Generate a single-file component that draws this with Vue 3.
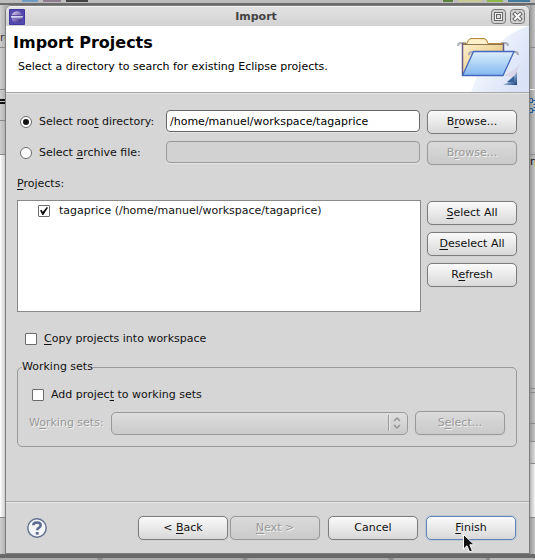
<script setup>
import { ref } from 'vue'

const source = ref('directory')
const rootPath = ref('/home/manuel/workspace/tagaprice')
const archivePath = ref('')
const projects = ref([
  { id: 'tagaprice', label: 'tagaprice (/home/manuel/workspace/tagaprice)', selected: true },
])
const copyProjects = ref(false)
const addToSets = ref(false)

function selectAll(value) {
  projects.value.forEach((p) => { p.selected = value })
}
</script>

<template>
  <div class="desktop">
    <div class="behind-top" aria-hidden="true"><i class="blue"></i><i class="violet"></i><i class="dark"></i><i class="space"></i><i class="green"></i><i class="olive"></i><i class="lime"></i><i class="sky"></i></div>

    <div class="behind left" aria-hidden="true">
      <div class="strip l-tab"><span>re</span></div>
      <div class="strip l-bar"></div>
      <div class="strip l-rule"></div>
      <div class="strip l-tools"></div>
      <div class="strip l-head"></div>
      <div class="strip page"></div>
      <div class="strip status"></div>
    </div>

    <main class="dialog">
      <div class="titlebar">
        <svg class="app-icon" viewBox="0 0 16 16" width="16" height="16" aria-hidden="true">
          <defs>
            <linearGradient id="ball" x1="0" y1="0" x2="1" y2="1">
              <stop offset="0" stop-color="#e9dff4" />
              <stop offset="0.45" stop-color="#8f7fc4" />
              <stop offset="1" stop-color="#251a72" />
            </linearGradient>
          </defs>
          <rect width="16" height="16" rx="1" fill="#5248b0" />
          <rect x="0.5" y="0.5" width="15" height="15" rx="1" fill="none" stroke="#4338a0" />
          <circle cx="8" cy="8" r="5.7" fill="url(#ball)" />
          <path d="M2 6.5h12M2 9.5h12" stroke="#37298a" stroke-width="0.8" />
          <path d="M2 7.4h12M2.500 8.900h11" stroke="#e4e6fb" stroke-width="0.9" />
        </svg>
        <span class="caption">Import</span>
        <button class="win" type="button" aria-label="Maximize">
          <svg viewBox="0 0 15 15" width="15" height="15">
            <rect x="0.5" y="0.5" width="14" height="14" rx="3" fill="#d2d2d2" stroke="#777" />
            <rect x="3.5" y="3.5" width="8" height="8" fill="#f4f4f4" stroke="#666" />
            <rect x="5.5" y="5.5" width="4" height="4" fill="#ddd" stroke="#666" />
          </svg>
        </button>
        <button class="win" type="button" aria-label="Close">
          <svg viewBox="0 0 15 15" width="15" height="15">
            <rect x="0.5" y="0.5" width="14" height="14" rx="3" fill="#d2d2d2" stroke="#777" />
            <path d="M5 5l5 5M10 5l-5 5" stroke="#666" stroke-width="4" stroke-linecap="square" />
            <path d="M5 5l5 5M10 5l-5 5" stroke="#fafafa" stroke-width="2" stroke-linecap="square" />
          </svg>
        </button>
      </div>

      <header class="banner">
        <div class="banner-text">
          <h1>Import Projects</h1>
          <p>Select a directory to search for existing Eclipse projects.</p>
        </div>
        <svg class="banner-art" viewBox="1 0 75 66" width="75" height="66" aria-hidden="true">
          <defs>
            <linearGradient id="wash" x1="0" y1="0" x2="1" y2="0.6">
              <stop offset="0" stop-color="#fff" />
              <stop offset="1" stop-color="#d9e2f7" />
            </linearGradient>
            <linearGradient id="manila" x1="0" y1="0" x2="1" y2="1">
              <stop offset="0" stop-color="#fff5d6" />
              <stop offset="1" stop-color="#e0b765" />
            </linearGradient>
            <linearGradient id="front" x1="0" y1="0" x2="0" y2="1">
              <stop offset="0" stop-color="#deeffd" />
              <stop offset="1" stop-color="#83b7f0" />
            </linearGradient>
            <linearGradient id="corner" x1="0" y1="0" x2="1" y2="1">
              <stop offset="0.4" stop-color="#b5d0ee" />
              <stop offset="1" stop-color="#123c78" />
            </linearGradient>
          </defs>
          <path d="M76 0C58 5 34 20 18 66H76Z" fill="url(#wash)" />
          <path d="M50 49q9-2 17-11l-6 14z" fill="#d9cfe0" opacity="0.7" />
          <path d="M5 20q0-3 3-3h5M48 17h4q3 0 3 3" fill="none" stroke="#aeb2b8" stroke-width="2" />
          <path d="M9.500 49V17.500H14Q15 12.500 18 12.500H31Q34 12.500 35 17.500H50.500V49Z" fill="url(#manila)" stroke="#b5893b" />
          <path d="M9.500 49V17M50.500 17V26" stroke="#625a83" stroke-width="1.500" />
          <path d="M10 18.500H50" stroke="#8c7753" />
          <path d="M15 18q1-4 4-4h11q3 0 4 4z" fill="#fff2cb" />
          <path d="M16 29q0-3 3-3h4M59 26h3q3 0 3 3" fill="none" stroke="#a7acb8" stroke-width="2" />
          <path d="M20.500 25.500H61L50 49.500H9.500Z" fill="url(#front)" stroke="#4468be" stroke-width="1.300" />
          <path d="M64 45V59H50Q60 55 64 45Z" fill="url(#corner)" />
          <path d="M61 50v6h-7z" fill="#356399" />
        </svg>
      </header>

      <form class="body" @submit.prevent>
        <div class="sources">
          <label class="choice"><input v-model="source" type="radio" name="source" value="directory"><span>Select roo<u>t</u> directory:</span></label>
          <input v-model="rootPath" class="field" type="text" aria-label="Root directory">
          <button class="btn" type="button"><span>B<u>r</u>owse...</span></button>

          <label class="choice"><input v-model="source" type="radio" name="source" value="archive"><span>Select <u>a</u>rchive file:</span></label>
          <input v-model="archivePath" class="field" type="text" aria-label="Archive file" disabled>
          <button class="btn" type="button" disabled><span>B<u>r</u>owse...</span></button>
        </div>

        <h2 id="projects-title"><u>P</u>rojects:</h2>
        <div class="projects">
          <ul class="list" aria-labelledby="projects-title">
            <li v-for="p in projects" :key="p.id">
              <label class="choice"><input v-model="p.selected" type="checkbox"><span>{{ p.label }}</span></label>
            </li>
          </ul>
          <div class="actions">
            <button class="btn" type="button" @click="selectAll(true)"><span><u>S</u>elect All</span></button>
            <button class="btn" type="button" @click="selectAll(false)"><span><u>D</u>eselect All</span></button>
            <button class="btn" type="button"><span>R<u>e</u>fresh</span></button>
          </div>
        </div>

        <label class="choice copy"><input v-model="copyProjects" type="checkbox"><span><u>C</u>opy projects into workspace</span></label>

        <fieldset class="sets">
          <legend>Working sets</legend>
          <label class="choice"><input v-model="addToSets" type="checkbox"><span>Add projec<u>t</u> to working sets</span></label>
          <div class="set-row">
            <label class="off" for="working-set">W<u>o</u>rking sets:</label>
            <div class="combo">
              <select id="working-set" disabled></select>
              <svg viewBox="0 0 16 16" width="16" height="16" aria-hidden="true">
                <path d="M0.500 0V16" stroke="#9a9a9a" />
                <path d="M1.500 0V16" stroke="#e8e8e8" />
                <path d="M6 6l3-3 3 3M6 10l3 3 3-3" fill="none" stroke="#959595" stroke-width="1.500" />
              </svg>
            </div>
            <button class="btn" type="button" disabled><span>S<u>e</u>lect...</span></button>
          </div>
        </fieldset>
      </form>

      <footer class="footer">
        <button class="help" type="button" aria-label="Help">
          <svg viewBox="0 0 20 20" width="20" height="20">
            <circle cx="10" cy="10" r="9.200" fill="#f3f5f8" stroke="#62718f" stroke-width="1.400" />
            <path d="M6.300 7.300Q6.300 4.400 10 4.400T13.700 7.200Q13.700 8.800 11.800 9.800Q10.200 10.600 10.200 12.200" fill="none" stroke="#5b6b8d" stroke-width="2.500" />
            <rect x="8.800" y="14" width="2.800" height="2.600" fill="#5b6b8d" />
          </svg>
        </button>
        <div class="pair">
          <button class="btn" type="button"><span>&lt; <u>B</u>ack</span></button>
          <button class="btn" type="button" disabled><span><u>N</u>ext &gt;</span></button>
        </div>
        <button class="btn" type="button"><span>Cancel</span></button>
        <div class="finish">
          <button class="btn primary" type="button"><span><u>F</u>inish</span></button>
          <svg class="pointer" viewBox="0 0 12 19" width="12" height="19" aria-hidden="true">
            <path d="M0.500 0.500V15L4 11.800L6.600 18L9.400 16.800L6.800 10.800H11.300Z" fill="#111" stroke="#fff" />
          </svg>
        </div>
      </footer>
    </main>

    <div class="behind right" aria-hidden="true">
      <div class="strip r-tab"></div>
      <div class="strip r-bar"></div>
      <div class="strip r-tools">
        <svg viewBox="0 0 5 16" width="5" height="16"><path d="M0 1.500H2.500V5.500H0M0 11.500H2.500V15.500H0M5 7.500H3.500M3 3.500H5M3 13.500H5M5 10.500H3.500" fill="none" stroke="#1d5c98" /></svg>
      </div>
      <div class="strip r-pane"><span>n</span></div>
      <div class="strip r-gap"></div>
      <div class="strip r-mid"></div>
      <div class="strip r-low"></div>
      <div class="strip r-light"></div>
      <div class="strip page"></div>
      <div class="strip status"></div>
    </div>

    <div class="behind-bottom" aria-hidden="true"><i></i><i></i><i></i><i></i><b></b></div>
  </div>
</template>

<style>
body {
  margin: 0;
  background: #b4b4b4;
}
</style>

<style scoped>
.desktop {
  display: grid;
  grid-template-columns: 5px minmax(0, 1fr) 5px;
  grid-template-rows: 5px 1fr 6px;
  min-height: 100vh;
  box-sizing: border-box;
  font: 11px/14px "DejaVu Sans", sans-serif;
  color: #111;
}

.behind-top {
  grid-column: 1 / -1;
  display: flex;
  height: 5px;
  box-sizing: border-box;
  padding: 0 5px 0 22px;
  gap: 5px;
  border-bottom: 2px solid #6c6c6c;
  background: #bdbdbd;
}
.behind-top i { width: 16px; height: 2px; }
.behind-top .blue { background: #6f9cc4; }
.behind-top .violet { width: 18px; background: #8f7d8e; }
.behind-top .dark { width: 22px; background: #444; }
.behind-top .space { flex: 1; }
.behind-top .green { width: 10px; background: #5c8239; }
.behind-top .olive { width: 24px; background: #c6c993; }
.behind-top .lime { background: #8fb648; }
.behind-top .sky { width: 22px; background: #44799f; }

.behind { display: flex; flex-direction: column; overflow: hidden; }
.strip {
  flex: none;
  box-sizing: border-box;
  border-bottom: 1px solid #888;
  background: linear-gradient(90deg, #cfcfcf, #b2b2b2);
  overflow: hidden;
}
.right .strip { background: linear-gradient(90deg, #989898, #c4c4c4); }
.strip span { display: block; }
.left .strip span { color: #333; }
.l-tab { height: 43px; padding-top: 26px; }
.l-bar { height: 42px; }
.l-rule { height: 14px; border-bottom: 5px double #111; }
.l-tools { height: 17px; }
.l-head { height: 34px; }
.behind .page { flex: 1; }
.left .page { background: linear-gradient(90deg, #fff, #cfcfcf); }
.right .page { background: linear-gradient(90deg, #b5b5b5, #f5f5f5); }
.behind .status { height: 36px; border: 0; }
.r-tab { height: 43px; }
.r-bar { height: 42px; border-bottom-color: #eee; }
.r-tools { height: 65px; padding-top: 7px; }
.r-tools svg { display: block; }
.r-pane { height: 234px; }
.r-gap { height: 4px; }
.r-mid { height: 31px; }
.r-low { height: 18px; }
.right .r-light { height: 22px; background: linear-gradient(90deg, #aaa, #ddd); }

.behind-bottom {
  grid-column: 1 / -1;
  display: flex;
  gap: 4px;
  height: 6px;
  box-sizing: border-box;
  border-top: 4px solid #696969;
  background: #8c8c8c;
}
.behind-bottom i {
  flex: 142;
  border-radius: 4px 4px 0 0;
  background: #aaa;
}
.behind-bottom i:first-child { flex: 98; border-radius: 0 4px 0 0; }
.behind-bottom i:nth-child(4) { flex: 94; border-radius: 4px 0 0 0; }
.behind-bottom b { flex: 45; background: #b8b8b8; }

.dialog {
  display: flex;
  flex-direction: column;
  box-sizing: border-box;
  border: 1px solid #7d7d7d;
  border-radius: 6px 6px 0 0;
  background: #d6d6d6;
  overflow: hidden;
}

.titlebar {
  display: flex;
  align-items: center;
  gap: 4px;
  height: 19px;
  padding: 0 4px 0 3px;
  border-top: 1px solid #f4f4f4;
  background: linear-gradient(#e2e2e2, #d2d2d2);
}
.app-icon { display: block; }
.caption {
  flex: 1;
  padding-right: 4px;
  text-align: center;
  font-weight: bold;
  color: #444;
}
.win { display: block; padding: 0; border: 0; background: none; }
.win svg { display: block; }

.banner {
  display: flex;
  justify-content: space-between;
  height: 66px;
  border-bottom: 1px solid #a6a6a6;
  background: #fff;
  box-shadow: 0 1px #e6e6e6;
}
.banner-text { padding: 7px 0 0 7px; }
.banner-art { display: block; flex: none; }
h1 {
  margin: 0;
  font-size: 16px;
  line-height: 20px;
  color: #000;
}
.banner p { margin: 7px 0 0 5px; color: #000; }

.body { flex: 1; padding: 17px 12px 0 11px; }

.sources {
  display: grid;
  grid-template-columns: 142px 1fr 90px;
  column-gap: 7px;
  row-gap: 7px;
  align-items: start;
}
.choice {
  display: flex;
  align-items: center;
  gap: 7px;
  white-space: nowrap;
}
.sources .choice { height: 24px; padding-left: 3px; }

u { text-decoration: underline; text-decoration-thickness: 1px; text-underline-offset: 2px; text-decoration-skip-ink: none; }

input[type="radio"],
input[type="checkbox"] {
  appearance: none;
  display: grid;
  place-items: center;
  flex: none;
  width: 12px;
  height: 12px;
  margin: 0;
  border: 1px solid #6b6b6b;
  border-radius: 1px;
  background: #fff;
}
input[type="radio"] { border-radius: 50%; }
input[type="radio"]:checked::after {
  content: "";
  width: 6px;
  height: 6px;
  border-radius: 50%;
  background: #111;
}
input[type="checkbox"]:checked::after {
  content: "";
  width: 8px;
  height: 8px;
  background: #111;
  clip-path: polygon(0 45%, 18% 35%, 36% 60%, 85% 0, 100% 8%, 42% 100%, 30% 100%);
}

.field {
  width: 100%;
  min-width: 0;
  height: 22px;
  box-sizing: border-box;
  margin: 0;
  padding: 0 3px;
  border: 1px solid #666;
  border-radius: 4px;
  background: #fff;
  box-shadow: 0 1px #e6e6e6;
  font: inherit;
  color: #000;
}
.field:disabled { border-color: #999; background: #d2d2d2; }

.btn {
  width: 90px;
  height: 24px;
  flex: none;
  box-sizing: border-box;
  margin: 0;
  padding: 0;
  border: 1px solid #7c7c7c;
  border-radius: 5px;
  background: linear-gradient(#fafafa, #ebebeb 45%, #d8d8d8);
  box-shadow: 0 0 1px #aaa;
  font: inherit;
  color: #111;
}
.btn:disabled {
  border-color: #999;
  background: linear-gradient(#dadada, #cacaca);
  color: #999;
  text-shadow: 1px 1px #f2f2f2;
}
.btn.primary { border-color: #6381b8; box-shadow: 0 0 2px #8da9d8; }

h2 {
  margin: 12px 0 9px;
  font-size: 11px;
  line-height: 14px;
  font-weight: normal;
}
.projects { display: grid; grid-template-columns: 1fr 90px; column-gap: 6px; }
.list {
  min-height: 110px;
  margin: 0;
  padding: 0;
  border: 1px solid #8a8a8a;
  background: #fff;
  list-style: none;
}
.list li { padding: 3px 0 0 20px; }
.list .choice { gap: 9px; }
.actions { display: flex; flex-direction: column; gap: 7px; padding-top: 1px; }

.copy { margin: 20px 0 0 8px; }

.sets {
  margin: 14px 0 0;
  padding: 14px 11px 11px 14px;
  border: 1px solid #999;
  border-radius: 5px;
  min-width: 0;
}
.sets legend { padding: 0; margin-left: -10px; }
.set-row { display: flex; align-items: center; gap: 7px; margin: 9px 0 0 -3px; }
.off { color: #999; text-shadow: 1px 1px #f2f2f2; white-space: nowrap; }
.combo { display: grid; flex: 1; align-items: center; }
.combo select {
  grid-area: 1 / 1;
  appearance: none;
  width: 100%;
  height: 23px;
  box-sizing: border-box;
  margin: 0;
  border: 1px solid #999;
  border-radius: 5px;
  background: linear-gradient(#dedede, #cacaca);
  opacity: 1;
}
.combo svg { grid-area: 1 / 1; justify-self: end; margin-right: 4px; }

.footer {
  display: flex;
  align-items: center;
  gap: 8px;
  padding: 14px 13px 13px 21px;
  border-top: 1px solid #aaa;
  box-shadow: inset 0 1px #e8e8e8;
}
.help { margin: 0 auto 0 0; padding: 0; border: 0; background: none; }
.help svg { display: block; }
.pair { display: flex; gap: 2px; }
.finish { position: relative; }
.pointer { position: absolute; left: 37px; top: 18px; }
</style>
